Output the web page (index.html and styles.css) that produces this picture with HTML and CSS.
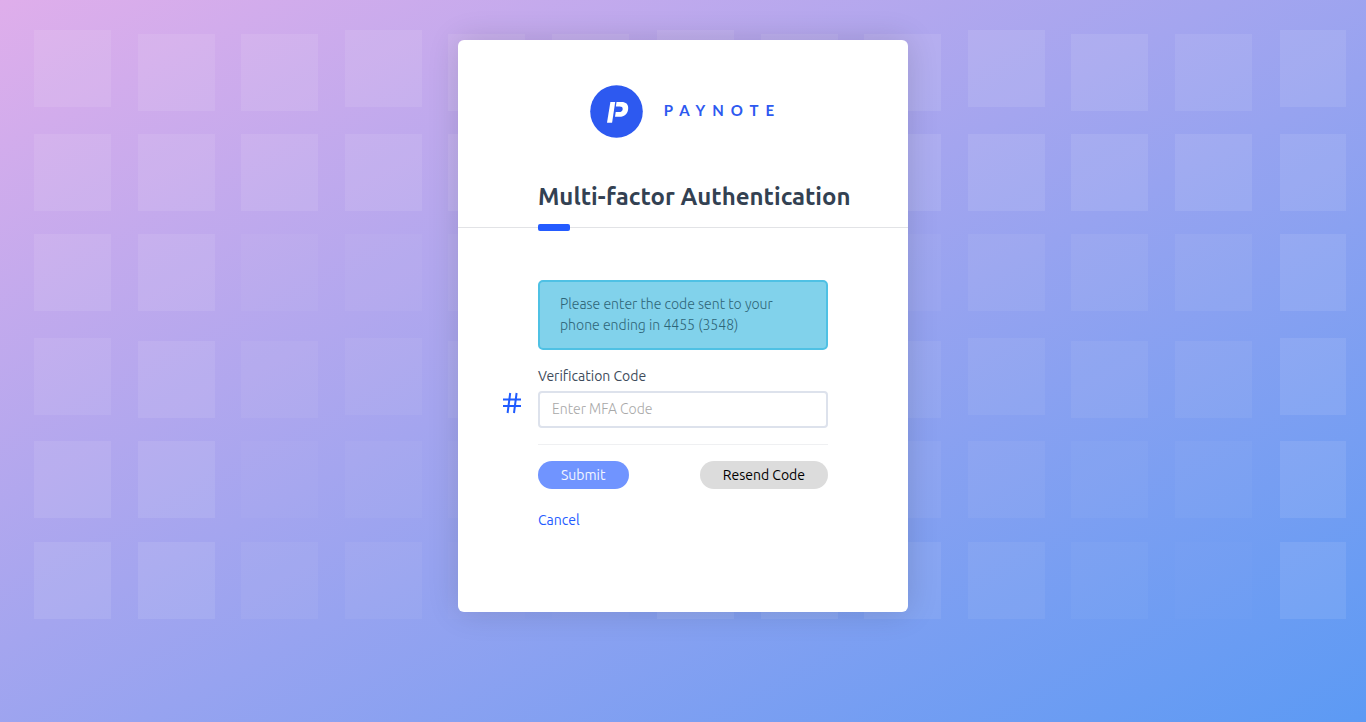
FILE: index.html
```html
<!DOCTYPE html>
<html lang="en">
<head>
<meta charset="utf-8">
<title>Paynote – Multi-factor Authentication</title>
<link rel="stylesheet" href="styles.css">
</head>
<body>
<svg class="tiles" id="tiles" width="1366" height="722" aria-hidden="true"></svg>
<main class="card">
  <div class="brand" role="img" aria-label="Paynote">
    <svg class="brand-mark" viewBox="0 0 53 53" aria-hidden="true">
      <circle cx="26.500" cy="26.500" r="26.300" fill="#2d59f0"/>
      <path d="M20.400 17H25.200L22.100 37.700H17z" fill="#fff"/>
      <path d="M26.500 17H31.500C36 17 38.200 19.200 38.200 22.900C38.200 28.500 34.600 31.700 29.400 31.700H25L25.700 27H28.900C31.300 27 32.700 25.800 32.700 23.900C32.700 22.300 31.600 21.600 29.800 21.600H25.900z" fill="#fff"/>
    </svg>
    <span class="brand-name">PAYNOTE</span>
  </div>
  <h1 class="title">Multi-factor Authentication</h1>
  <form class="form">
    <p class="notice" role="status">Please enter the code sent to your phone ending in 4455 (3548)</p>
    <div class="field">
      <svg class="field-icon" viewBox="0 0 20 22" aria-hidden="true"><path d="M8.200 1L5.600 21M14.600 1L12 21M1 7.500H19M1 14H19" fill="none" stroke="#1f5bff" stroke-width="2"/></svg>
      <label for="code">Verification Code</label>
      <input id="code" type="text" placeholder="Enter MFA Code">
    </div>
    <div class="actions">
      <button class="btn btn-primary" type="submit">Submit</button>
      <button class="btn btn-secondary" type="button">Resend Code</button>
    </div>
    <a class="cancel" href="#">Cancel</a>
  </form>
</main>
<script src="tiles.js"></script>
</body>
</html>
```
FILE: styles.css
```css
* { box-sizing: border-box; }

body {
  margin: 0;
  min-height: 100vh;
  padding: 40px 16px;
  background: linear-gradient(to bottom right, #dfaeeb, #5c9af4) no-repeat fixed;
  color: #3e4b5b;
  font-family: Ubuntu, "Noto Sans", sans-serif;
  font-size: 14px;
  line-height: 21px;
}

.tiles {
  position: absolute;
  top: 0;
  left: 0;
  max-width: 100%;
}

.card {
  position: relative;
  max-width: 450px;
  margin: 0 auto;
  padding-bottom: 81px;
  background: #fff;
  border-radius: 6px;
  box-shadow: 0 0 32px rgba(0, 0, 0, 0.14);
}

.brand {
  display: flex;
  align-items: center;
  justify-content: center;
  gap: 21px;
  padding: 45px 0 39px;
}

.brand-mark { width: 53px; height: 53px; }

.brand-name {
  margin-right: -5px;
  padding-bottom: 2px;
  color: #2d59f0;
  font-family: Lato, sans-serif;
  font-size: 15px;
  font-weight: 700;
  letter-spacing: 7px;
}

.title {
  position: relative;
  margin: 0;
  padding: 4px 0 14px 80px;
  border-bottom: 1px solid #e2e3e6;
  color: #334152;
  font-size: 24px;
  font-weight: 600;
  line-height: 32px;
  white-space: nowrap;
}

.title::after {
  content: "";
  position: absolute;
  left: 80px;
  bottom: -4px;
  width: 32px;
  height: 7px;
  background: #245bff;
  border-radius: 2px;
}

.form { padding: 52px 80px 0; }

.notice {
  margin: 0 0 16px;
  padding: 12px 20px;
  border: 2px solid #4fc1e4;
  border-radius: 5px;
  background: #81d2eb;
  color: #2e6577;
  font-weight: 300;
}

.field {
  position: relative;
  padding-bottom: 16px;
  border-bottom: 1px solid #eff0f2;
}

.field label { display: block; margin-bottom: 4px; }

.field input {
  display: block;
  width: 100%;
  height: 37px;
  padding: 0 12px 2px;
  border: 2px solid #dde2ec;
  border-radius: 4px;
  font: inherit;
  font-weight: 300;
}

.field input::placeholder { color: #a8a8a8; opacity: 1; }

.field-icon {
  position: absolute;
  left: -36px;
  top: 26px;
  width: 20px;
  height: 22px;
}

.actions {
  display: flex;
  justify-content: space-between;
  padding: 16px 0 21px;
}

.btn {
  height: 28px;
  padding: 0 23px;
  border: 0;
  border-radius: 14px;
  font: inherit;
}

.btn-primary { background: #7094ff; color: #f3f6ff; }
.btn-secondary { background: #dcdcdc; color: #000; }

.cancel { color: #245bff; text-decoration: none; }
```
FILE: tiles.js
```js
// Draws the translucent tile grid behind the card; each row lists tile opacities in percent.
const lefts = [34, 138, 241, 345, 448, 552, 657, 761, 864, 968, 1071, 1175, 1280];
const rows = [
  { y: 30, stagger: 4, alpha: [9, 9, 9, 9, 9, 9, 9, 9, 9, 9, 9, 8, 9] },
  { y: 134, stagger: 0, alpha: [9, 9, 9, 9, 9, 9, 9, 9, 9, 9, 9, 9, 9] },
  { y: 234, stagger: 0, alpha: [9, 9, 4, 4, 4, 4, 4, 4, 4, 6, 6, 6, 9] },
  { y: 338, stagger: 3, alpha: [8, 9, 5, 5, 5, 5, 5, 5, 6, 6, 6, 6, 9] },
  { y: 441, stagger: 0, alpha: [9, 9, 3, 4, 3, 3, 5, 5, 5, 5, 3, 3, 9] },
  { y: 542, stagger: 0, alpha: [9, 9, 5, 5, 2, 2, 8, 8, 7, 6, 3, 2, 9] }
];
const svg = document.getElementById("tiles");
for (const row of rows) {
  lefts.forEach((x, i) => {
    const tile = document.createElementNS("http://www.w3.org/2000/svg", "rect");
    tile.setAttribute("x", x);
    tile.setAttribute("y", row.y + (i % 3 ? row.stagger : 0));
    tile.setAttribute("width", i === 12 ? 66 : 77);
    tile.setAttribute("height", 77);
    tile.setAttribute("fill", "#fff");
    tile.setAttribute("fill-opacity", row.alpha[i] / 100);
    svg.appendChild(tile);
  });
}
```
